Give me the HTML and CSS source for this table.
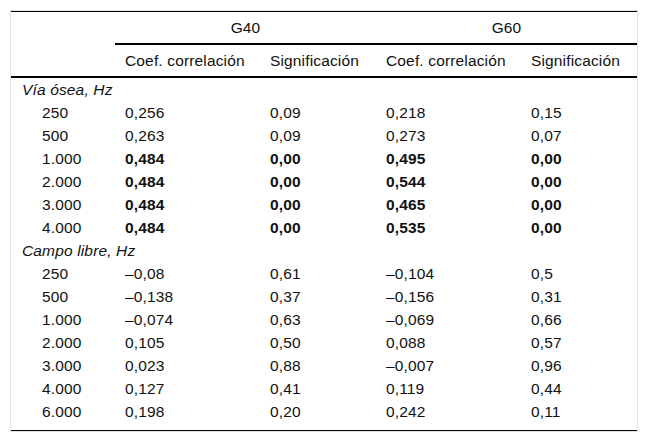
FILE: index.html
```html
<!DOCTYPE html>
<html lang="es">
<head>
<meta charset="utf-8">
<link rel="stylesheet" href="styles.css">
</head>
<body>
<div class="frame">
<table class="tbl">
<colgroup>
<col class="c1"><col class="c2"><col class="c3"><col class="c4"><col class="c5">
</colgroup>
<thead>
<tr class="h1">
<th></th>
<th colspan="2" class="grp">G40</th>
<th colspan="2" class="grp">G60</th>
</tr>
<tr class="h2">
<th></th>
<th>Coef. correlación</th>
<th>Significación</th>
<th>Coef. correlación</th>
<th>Significación</th>
</tr>
</thead>
<tbody>
<tr class="sec"><td colspan="5">Vía ósea, Hz</td></tr>
<tr><td class="lbl">250</td><td>0,256</td><td>0,09</td><td>0,218</td><td>0,15</td></tr>
<tr><td class="lbl">500</td><td>0,263</td><td>0,09</td><td>0,273</td><td>0,07</td></tr>
<tr class="b"><td class="lbl">1.000</td><td>0,484</td><td>0,00</td><td>0,495</td><td>0,00</td></tr>
<tr class="b"><td class="lbl">2.000</td><td>0,484</td><td>0,00</td><td>0,544</td><td>0,00</td></tr>
<tr class="b"><td class="lbl">3.000</td><td>0,484</td><td>0,00</td><td>0,465</td><td>0,00</td></tr>
<tr class="b"><td class="lbl">4.000</td><td>0,484</td><td>0,00</td><td>0,535</td><td>0,00</td></tr>
<tr class="sec"><td colspan="5">Campo libre, Hz</td></tr>
<tr><td class="lbl">250</td><td>–0,08</td><td>0,61</td><td>–0,104</td><td>0,5</td></tr>
<tr><td class="lbl">500</td><td>–0,138</td><td>0,37</td><td>–0,156</td><td>0,31</td></tr>
<tr><td class="lbl">1.000</td><td>–0,074</td><td>0,63</td><td>–0,069</td><td>0,66</td></tr>
<tr><td class="lbl">2.000</td><td>0,105</td><td>0,50</td><td>0,088</td><td>0,57</td></tr>
<tr><td class="lbl">3.000</td><td>0,023</td><td>0,88</td><td>–0,007</td><td>0,96</td></tr>
<tr><td class="lbl">4.000</td><td>0,127</td><td>0,41</td><td>0,119</td><td>0,44</td></tr>
<tr class="last"><td class="lbl">6.000</td><td>0,198</td><td>0,20</td><td>0,242</td><td>0,11</td></tr>
</tbody>
</table>
</div>
</body>
</html>
```

FILE: styles.css
```css
html, body {
  margin: 0;
  padding: 0;
  background: #fff;
}
body {
  font-family: "Liberation Sans", Arial, sans-serif;
  font-size: 15.5px;
  letter-spacing: 0.15px;
  color: #111;
}
.frame {
  margin: 10px 0 0 10px;
  width: 626px;
  border: 1px solid #e2e2e2;
}
.tbl {
  width: 626px;
  border-collapse: collapse;
  table-layout: fixed;
  border-top: 1px solid #000;
  border-bottom: 1px solid #000;
}
.c1 { width: 104px; }
.c2 { width: 145px; }
.c3 { width: 116px; }
.c4 { width: 145px; }
.c5 { width: 116px; }
th {
  font-weight: normal;
  text-align: left;
  padding: 0 0 0 10px;
  height: 31px;
  white-space: nowrap;
}
.h1 th.grp {
  text-align: center;
  border-bottom: 2px solid #000;
  padding: 0;
}
.h2 th {
  border-bottom: 2px solid #000;
}
td {
  padding: 0 0 0 10px;
  height: 23px;
  line-height: 17px;
  white-space: nowrap;
}
.sec td {
  font-style: italic;
  padding-left: 11px;
}
td.lbl {
  padding-left: 31px;
}
.b td {
  font-weight: bold;
}
.b td.lbl {
  font-weight: normal;
}
.last td {
  height: 23px;
  padding-bottom: 7px;
}
```
